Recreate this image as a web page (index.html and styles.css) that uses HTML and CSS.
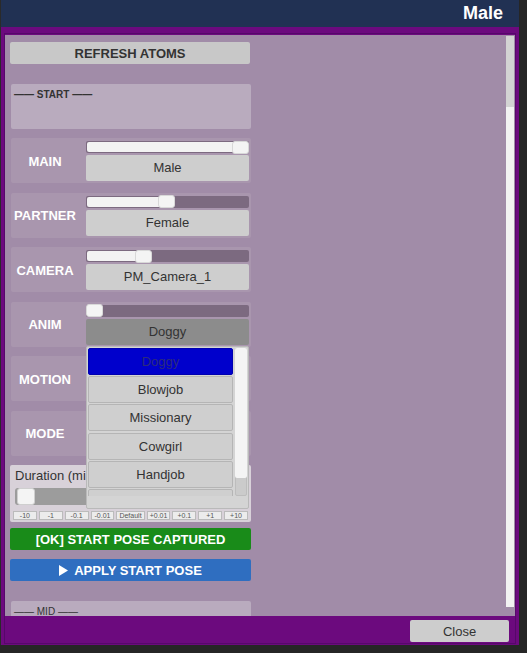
FILE: index.html
```html
<!DOCTYPE html>
<html lang="en">
<head>
    <meta charset="UTF-8">
    <meta name="viewport" content="width=device-width, initial-scale=1.0">
    <title>Male</title>
    <link rel="stylesheet" href="styles.css">
</head>
<body>
    <div class="window">
        <header class="titlebar"><span class="title">Male</span></header>
        <div class="frame">
            <div class="inner">
                <div class="panel">
                    <div class="content">
                        <button class="btn refresh">REFRESH ATOMS</button>
                        <div class="section start"><span class="section-title">—— START ——</span></div>
                        <div class="rows">
                            <div class="row">
                                <div class="row-label">MAIN</div>
                                <div class="row-controls">
                                    <div class="slider"><div class="slider-fill" style="width: 146px"></div><div class="slider-thumb"></div></div>
                                    <div class="select">Male</div>
                                </div>
                            </div>
                            <div class="row">
                                <div class="row-label">PARTNER</div>
                                <div class="row-controls">
                                    <div class="slider"><div class="slider-fill" style="width: 72px"></div><div class="slider-thumb"></div></div>
                                    <div class="select">Female</div>
                                </div>
                            </div>
                            <div class="row">
                                <div class="row-label">CAMERA</div>
                                <div class="row-controls">
                                    <div class="slider"><div class="slider-fill" style="width: 49px"></div><div class="slider-thumb"></div></div>
                                    <div class="select">PM_Camera_1</div>
                                </div>
                            </div>
                            <div class="row">
                                <div class="row-label">ANIM</div>
                                <div class="row-controls">
                                    <div class="slider"><div class="slider-fill" style="width: 0px"></div><div class="slider-thumb"></div></div>
                                    <div class="select open">Doggy
                                        <div class="dropdown-list">
                                            <div class="list-items">
                                                <div class="list-item selected">Doggy</div>
                                                <div class="list-item">Blowjob</div>
                                                <div class="list-item">Missionary</div>
                                                <div class="list-item">Cowgirl</div>
                                                <div class="list-item">Handjob</div>
                                                <div class="list-item"></div>
                                            </div>
                                            <div class="list-scroll"><div class="list-thumb"></div></div>
                                        </div>
                                    </div>
                                </div>
                            </div>
                            <div class="row">
                                <div class="row-label">MOTION</div>
                                <div class="row-controls">
                                    <div class="slider"><div class="slider-fill" style="width: 40px"></div><div class="slider-thumb"></div></div>
                                    <div class="select"></div>
                                </div>
                            </div>
                            <div class="row">
                                <div class="row-label">MODE</div>
                                <div class="row-controls">
                                    <div class="slider"><div class="slider-fill" style="width: 0px"></div><div class="slider-thumb"></div></div>
                                    <div class="select"></div>
                                </div>
                            </div>
                        </div>
                        <div class="duration">
                            <div class="duration-label">Duration (min)</div>
                            <div class="duration-slider"><div class="duration-thumb"></div></div>
                            <div class="steps">
                                <span class="step">-10</span>
                                <span class="step">-1</span>
                                <span class="step">-0.1</span>
                                <span class="step">-0.01</span>
                                <span class="step wide">Default</span>
                                <span class="step">+0.01</span>
                                <span class="step">+0.1</span>
                                <span class="step">+1</span>
                                <span class="step">+10</span>
                            </div>
                        </div>
                        <button class="btn ok">[OK] START POSE CAPTURED</button>
                        <button class="btn apply"><svg class="play" width="9" height="11" viewBox="0 0 9 11"><path d="M0 0 L9 5.5 L0 11 Z" fill="#ffffff"/></svg>APPLY START POSE</button>
                        <div class="section mid"><span class="section-title light">—— MID ——</span></div>
                    </div>
                    <div class="scrollbar"><div class="scroll-thumb"></div></div>
                </div>
                <div class="footer"><button class="close">Close</button></div>
            </div>
        </div>
    </div>
</body>
</html>
```

FILE: styles.css
```css
* {
    box-sizing: border-box;
}
html, body {
    margin: 0;
    padding: 0;
    background: #262626;
    font-family: "Liberation Sans", Arial, sans-serif;
}
.window {
    width: 519px;
    border-left: 1px solid #2a2a2a;
}
.titlebar {
    height: 27px;
    background: #213153;
    display: flex;
    align-items: center;
    justify-content: flex-end;
    padding-right: 16px;
}
.title {
    color: #ffffff;
    font-size: 18px;
    font-weight: bold;
}
.frame {
    background: #6c0a7e;
    padding: 6px 3px 1px 3px;
}
.inner {
    border: 1px solid #56086a;
    padding-top: 1px;
}
.panel {
    height: 581px;
    background: #a18ca8;
    display: flex;
    overflow: hidden;
}
.content {
    width: 246px;
    padding: 7px 0 0 5px;
    display: flex;
    flex-direction: column;
}
.content > * {
    flex-shrink: 0;
}
.btn {
    display: flex;
    align-items: center;
    justify-content: center;
    height: 22px;
    width: 241px;
    border: none;
    border-radius: 2px;
    padding: 0;
    font-family: inherit;
    font-size: 13px;
    font-weight: bold;
}
.refresh {
    width: 240px;
    background: #c8c8c8;
    color: #333333;
}
.ok {
    margin-top: 6px;
    background: #198b19;
    color: #ffffff;
}
.apply {
    margin-top: 9px;
    background: #2f6ec0;
    color: #ffffff;
}
.play {
    margin-right: 6px;
}
.section {
    height: 45px;
    margin-left: 1px;
    width: 240px;
    background: #b9abbe;
    border-radius: 2px;
    padding: 0 3px;
}
.start {
    margin-top: 20px;
}
.mid {
    margin-top: 20px;
}
.section-title {
    font-size: 10px;
    line-height: 12px;
    font-weight: bold;
    color: #333333;
}
.section-title.light {
    font-weight: normal;
}
.rows {
    margin-top: 9px;
    display: flex;
    flex-direction: column;
    gap: 9.5px;
}
.row {
    flex-shrink: 0;
    margin-left: 1px;
    width: 240px;
    height: 45px;
    background: #a996ae;
    border-radius: 2px;
    display: flex;
    align-items: center;
    padding: 3px 2px 2px 0;
    gap: 7px;
}
.row-label {
    width: 68px;
    text-align: center;
    color: #ffffff;
    font-size: 13px;
    font-weight: bold;
}
.row-controls {
    width: 163px;
    align-self: stretch;
    display: flex;
    flex-direction: column;
    gap: 2px;
}
.slider {
    flex-shrink: 0;
    height: 12px;
    background: #7c6a80;
    border-radius: 2px;
    display: flex;
    align-items: center;
}
.slider-fill {
    height: 10px;
    margin-left: 1px;
    margin-right: -1px;
    background: #f3f3f3;
    border-radius: 2px 0 0 2px;
}
.slider-thumb {
    width: 17px;
    height: 13px;
    background: #f4f4f4;
    border: 1px solid #d8d8d8;
    border-radius: 3px;
}
.select {
    flex-shrink: 0;
    position: relative;
    height: 26px;
    line-height: 26px;
    background: #cecece;
    border-radius: 2px;
    text-align: center;
    font-size: 13px;
    color: #333333;
}
.select.open {
    background: #8c8c8c;
}
.dropdown-list {
    position: absolute;
    z-index: 10;
    left: 0;
    top: calc(100% + 1px);
    width: 163px;
    height: 163px;
    background: #d4d4d4;
    border: 1px solid #b9b9b9;
    border-radius: 2px;
    padding: 1px 1px 12px 1px;
    display: flex;
    gap: 2px;
}
.list-items {
    flex: 1;
    overflow: hidden;
    display: flex;
    flex-direction: column;
    gap: 1.4px;
}
.list-item {
    flex-shrink: 0;
    height: 27px;
    line-height: 25px;
    background: #cfcfcf;
    border: 1px solid #b5b5b5;
    border-radius: 2px;
    text-align: center;
    font-size: 13px;
    color: #333333;
}
.list-item.selected {
    background: #0000cc;
    border-color: #0000b0;
    color: #2b2b7c;
}
.list-scroll {
    width: 12px;
    background: #cbcbcb;
    border: 1px solid #bdbdbd;
    border-radius: 2px;
}
.list-thumb {
    height: 130px;
    margin: -1px;
    background: #f4f4f4;
    border-radius: 2px;
}
.duration {
    margin-top: 9.5px;
    width: 241px;
    height: 57px;
    background: #d8d1d9;
    border-radius: 2px;
    padding: 3px 3px 2px 3px;
    display: flex;
    flex-direction: column;
}
.duration > * {
    flex-shrink: 0;
}
.duration-label {
    padding-left: 2px;
    font-size: 13px;
    line-height: 15px;
    color: #333333;
}
.duration-slider {
    margin-top: 5px;
    margin-left: 2px;
    height: 17px;
    background: #9c9c9c;
    border-radius: 3px;
    padding-left: 2px;
}
.duration-thumb {
    width: 18px;
    height: 17px;
    background: #f4f4f4;
    border: 1px solid #cfcfcf;
    border-radius: 3px;
}
.steps {
    margin-top: 6px;
    display: flex;
    gap: 2px;
}
.step {
    flex: 1;
    height: 9px;
    background: #ececec;
    border: 1px solid #bbbbbb;
    font-size: 7px;
    line-height: 7px;
    text-align: center;
    color: #555555;
}
.step.wide {
    flex: 1.2;
}
.scrollbar {
    flex-shrink: 0;
    margin: 1px 1px 0 auto;
    width: 8px;
    height: 571px;
    background: #d3d3d3;
    padding-top: 71px;
}
.scroll-thumb {
    height: 500px;
    background: #f2f2f2;
}
.footer {
    height: 27px;
    display: flex;
    justify-content: flex-end;
    padding: 4px 6px 1px 0;
}
.close {
    width: 99px;
    height: 22px;
    border: none;
    border-radius: 2px;
    background: #cdcdcd;
    font-family: inherit;
    font-size: 13px;
    color: #333333;
    padding: 0;
}
```
